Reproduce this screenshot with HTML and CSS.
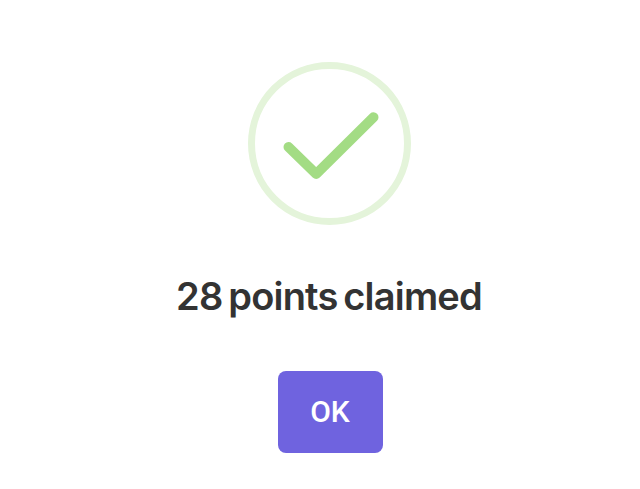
FILE: index.html
```html
<!DOCTYPE html>
<html lang="en">
<head>
  <meta charset="UTF-8">
  <title>Points claimed</title>
  <link rel="stylesheet" href="styles.css">
</head>
<body>
  <div class="claim-dialog">
    <svg class="check-icon" viewBox="0 0 164 164">
      <circle cx="81.5" cy="81.5" r="78" fill="none" stroke="#e4f4da" stroke-width="7"/>
      <path d="M40.5 85 L68.2 112 L125.5 55.3" fill="none" stroke="#a3dc84" stroke-width="10" stroke-linecap="round" stroke-linejoin="round"/>
    </svg>
    <h1 class="claim-title">28 points claimed</h1>
    <button class="btn-ok">OK</button>
  </div>
</body>
</html>
```

FILE: styles.css
```css
html, body {
  margin: 0;
  padding: 0;
  background: #fff;
}
.claim-dialog {
  display: flex;
  flex-direction: column;
  align-items: center;
  padding: 62px 0 0 20px;
}
.check-icon {
  display: block;
  width: 164px;
  height: 164px;
}
.claim-title {
  margin: 48px 2px 0 0;
  font-family: "Inter", "Open Sans", sans-serif;
  font-size: 38px;
  line-height: 44px;
  font-weight: 600;
  letter-spacing: -0.8px;
  word-spacing: -3px;
  color: #333;
}
.btn-ok {
  margin-top: 53px;
  padding: 0 0 2px 0;
  width: 105px;
  height: 82px;
  border: none;
  border-radius: 8px;
  background: #6f63df;
  color: #fff;
  font-family: "Roboto", sans-serif;
  font-size: 30px;
  font-weight: 500;
}
```
